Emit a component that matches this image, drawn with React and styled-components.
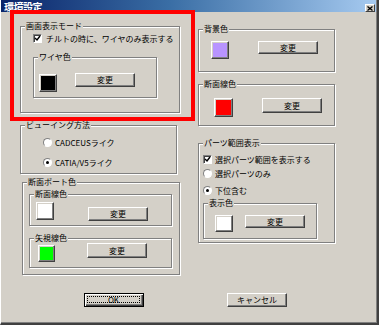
import React from 'react';
import styled, { createGlobalStyle } from 'styled-components';

const GlobalStyle = createGlobalStyle`
  html, body {
    margin: 0;
    padding: 0;
    background: #d4d0c8;
  }
  body {
    font-family: "Noto Sans CJK JP", "Noto Sans", sans-serif;
    font-size: 8px;
    color: #000;
  }
`;

const Window = styled.div`
  position: relative;
  box-sizing: border-box;
  width: 379px;
  height: 325px;
  display: flex;
  flex-direction: column;
  background: #d4d0c8;
  border-left: 1px solid #fff;
  border-right: 2px solid #404040;
  border-bottom: 2px solid #404040;
  box-shadow: inset -1px -1px 0 #808080;
  overflow: hidden;
`;

const TitleBar = styled.div`
  height: 12px;
  margin-right: 1px;
  display: flex;
  align-items: center;
  justify-content: space-between;
  overflow: hidden;
  background: linear-gradient(to right, #0a246a 0%, #3a6ea5 45%, #a6caf0 100%);
`;

const TitleText = styled.span`
  padding-left: 3px;
  color: #fff;
  font-size: 10px;
  line-height: 11px;
  font-weight: bold;
  letter-spacing: -0.5px;
`;

const CloseButton = styled.div`
  box-sizing: border-box;
  align-self: flex-end;
  width: 10px;
  height: 8px;
  margin-right: 1px;
  display: flex;
  align-items: center;
  justify-content: center;
  background: #d4d0c8;
  border: 1px solid;
  border-color: #fff #404040 #404040 #fff;
`;

const Body = styled.div`
  display: flex;
  align-items: flex-start;
  padding-left: 19px;
`;

const Column = styled.div`
  display: flex;
  flex-direction: column;
  width: ${p => p.$w}px;
  margin-left: ${p => p.$ml || 0}px;
`;

const Group = styled.div`
  position: relative;
  box-sizing: border-box;
  flex-shrink: 0;
  width: ${p => p.$w}px;
  height: ${p => p.$h}px;
  margin: ${p => p.$mt || 0}px 0 0 ${p => p.$ml || 0}px;
  padding: ${p => p.$pad || '0'};
  border: 1px solid #808080;
  box-shadow: inset 1px 1px 0 #fff, 1px 1px 0 #fff;
`;

const Legend = styled.span`
  position: absolute;
  top: -6px;
  left: 4px;
  padding: 0 1px;
  line-height: 10px;
  background: #d4d0c8;
  white-space: nowrap;
`;

const ColorRow = styled.div`
  display: flex;
  align-items: flex-start;
  gap: ${p => p.$gap}px;
`;

const Swatch = styled.div`
  box-sizing: border-box;
  flex-shrink: 0;
  width: ${p => p.$s || 18}px;
  height: ${p => p.$sh || p.$s || 18}px;
  background: ${p => p.$c};
  border: 1px solid;
  border-color: #fff #404040 #404040 #fff;
  box-shadow: inset -1px -1px 0 #808080, inset 1px 1px 0 #d4d0c8;
`;

const Button = styled.button`
  box-sizing: border-box;
  flex-shrink: 0;
  width: 60px;
  height: ${p => p.$h || 14}px;
  margin-top: ${p => p.$dy || 0}px;
  padding: 0;
  display: flex;
  align-items: center;
  justify-content: center;
  background: #d4d0c8;
  color: #000;
  font: inherit;
  line-height: 10px;
  border: 1px solid;
  border-color: #fff #404040 #404040 #fff;
  box-shadow: inset -1px -1px 0 #808080;
`;

const DefaultButton = styled(Button)`
  padding: 2px 3px 3px 2px;
  border: 1px solid #000;
  box-shadow: inset 1px 1px 0 #fff, inset -1px -1px 0 #404040, inset -2px -2px 0 #808080;
`;

const FocusRing = styled.span`
  box-sizing: border-box;
  flex: 1;
  align-self: stretch;
  display: flex;
  align-items: center;
  justify-content: center;
  border: 1px dotted #000;
  font-weight: normal;
`;

const OptionRow = styled.div`
  display: flex;
  align-items: center;
  gap: ${p => p.$gap || 3}px;
  height: 9px;
  margin-top: ${p => p.$mt || 0}px;
  line-height: 10px;
  white-space: nowrap;
`;

const Box = styled.span`
  box-sizing: border-box;
  flex-shrink: 0;
  width: 9px;
  height: 9px;
  display: flex;
  align-items: center;
  justify-content: center;
  background: #fff;
  border: 1px solid;
  border-color: #808080 #fff #fff #808080;
  box-shadow: inset 1px 1px 0 #404040;
`;

const Radio = styled.span`
  box-sizing: border-box;
  flex-shrink: 0;
  width: 9px;
  height: 9px;
  display: flex;
  align-items: center;
  justify-content: center;
  border-radius: 50%;
  background: #fff;
  border: 1px solid;
  border-color: #808080 #fff #fff #808080;
  &::after {
    content: '';
    display: ${p => (p.$on ? 'block' : 'none')};
    width: 3px;
    height: 3px;
    border-radius: 50%;
    background: #000;
  }
`;

const Footer = styled.div`
  display: flex;
  gap: 83px;
  margin-top: 18px;
  padding-left: 83px;
`;

const Highlight = styled.div`
  position: absolute;
  left: 9px;
  top: 10px;
  width: 185px;
  height: 111px;
  box-sizing: border-box;
  border: 4px solid #ff0000;
  pointer-events: none;
`;

const Check = () => (
  <svg width="7" height="7" viewBox="0 0 7 7">
    <path d="M1 3 L3 5 L6 1" fill="none" stroke="#000" strokeWidth="1.4" />
  </svg>
);

const Cross = () => (
  <svg width="6" height="5" viewBox="0 0 6 5">
    <path d="M0.5 0.5 L5.5 4.5 M5.5 0.5 L0.5 4.5" stroke="#000" strokeWidth="1.3" />
  </svg>
);

export default function App() {
  return (
    <>
      <GlobalStyle />
      <Window>
        <TitleBar>
          <TitleText>環境設定</TitleText>
          <CloseButton><Cross /></CloseButton>
        </TitleBar>

        <Body>
          <Column $w={160}>
            <Group $mt={14} $w={160} $h={87} $pad="7px 0 0 12px">
              <Legend>画面表示モード</Legend>
              <OptionRow $gap={4}>
                <Box><Check /></Box>
                <span>チルトの時に、ワイヤのみ表示する</span>
              </OptionRow>
              <Group $mt={14} $w={124} $h={41} $pad="16px 0 0 5px">
                <Legend>ワイヤ色</Legend>
                <ColorRow $gap={18}>
                  <Swatch $c="#000" />
                  <Button $dy={-1}>変更</Button>
                </ColorRow>
              </Group>
            </Group>

            <Group $mt={12} $w={157} $h={49} $pad="12px 0 0 22px">
              <Legend>ビューイング方法</Legend>
              <OptionRow>
                <Radio />
                <span>CADCEUSライク</span>
              </OptionRow>
              <OptionRow $mt={11}>
                <Radio $on />
                <span>CATIA/V5ライク</span>
              </OptionRow>
            </Group>

            <Group $mt={8} $ml={2} $w={158} $h={93} $pad="11px 0 0 6px">
              <Legend>断面ボート色</Legend>
              <Group $w={143} $h={32} $pad="7px 0 0 6px">
                <Legend>断面線色</Legend>
                <ColorRow $gap={34}>
                  <Swatch $c="#fff" />
                  <Button $dy={5}>変更</Button>
                </ColorRow>
              </Group>
              <Group $mt={12} $w={143} $h={30} $pad="6px 0 0 8px">
                <Legend>矢視線色</Legend>
                <ColorRow $gap={32}>
                  <Swatch $c="#00ff00" $s={17} />
                  <Button $dy={-2} $h={15}>変更</Button>
                </ColorRow>
              </Group>
            </Group>
          </Column>

          <Column $w={137} $ml={18}>
            <Group $mt={17} $w={137} $h={43} $pad="11px 0 0 12px">
              <Legend>背景色</Legend>
              <ColorRow $gap={29}>
                <Swatch $c="#b894ff" />
                <Button $h={13}>変更</Button>
              </ColorRow>
            </Group>

            <Group $mt={12} $w={137} $h={42} $pad="13px 0 0 15px">
              <Legend>断面線色</Legend>
              <ColorRow $gap={29}>
                <Swatch $c="#ff0000" $s={19} />
                <Button $h={15}>変更</Button>
              </ColorRow>
            </Group>

            <Group $mt={17} $w={137} $h={100} $pad="11px 0 0 4px">
              <Legend>パーツ範囲表示</Legend>
              <OptionRow $gap={3}>
                <Box><Check /></Box>
                <span>選択パーツ範囲を表示する</span>
              </OptionRow>
              <OptionRow $mt={5} $gap={3}>
                <Radio />
                <span>選択パーツのみ</span>
              </OptionRow>
              <OptionRow $mt={8} $gap={3}>
                <Radio $on />
                <span>下位含む</span>
              </OptionRow>
              <Group $mt={8} $w={114} $h={36} $pad="11px 0 0 11px">
                <Legend>表示色</Legend>
                <ColorRow $gap={12}>
                  <Swatch $c="#fff" $sh={17} />
                  <Button $h={13}>変更</Button>
                </ColorRow>
              </Group>
            </Group>
          </Column>
        </Body>

        <Footer>
          <DefaultButton><FocusRing>OK</FocusRing></DefaultButton>
          <Button>キャンセル</Button>
        </Footer>

        <Highlight />
      </Window>
    </>
  );
}
